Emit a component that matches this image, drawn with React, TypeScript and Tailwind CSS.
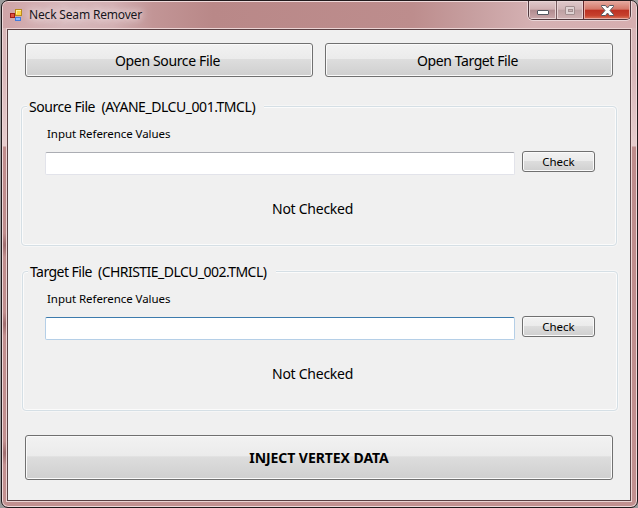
import React from "react";

type ButtonProps = { className: string; children: React.ReactNode };

function WinButton({ className, children }: ButtonProps) {
  return (
    <button
      className={`shrink-0 rounded-[3px] border border-[#707070] bg-[linear-gradient(to_bottom,#f2f2f2_0%,#ebebeb_47%,#dddddd_48%,#cfcfcf_100%)] text-center whitespace-nowrap text-black shadow-[inset_0_0_0_1px_#fafafa] ${className}`}
    >
      {children}
    </button>
  );
}

type GroupProps = {
  title: React.ReactNode;
  groupClass: string;
  legendClass: string;
  bodyClass: string;
  inputClass: string;
};

function Group({ title, groupClass, legendClass, bodyClass, inputClass }: GroupProps) {
  return (
    <section className={`h-[140px] w-[596px] rounded-[4px] border border-[#d5dfe5] shadow-[inset_0_0_0_1px_#fbfbfb,0_0_0_1px_#f6f6f6] ${groupClass}`}>
      <h2 className={`-mt-[11px] ml-[5px] h-[20px] bg-[#f0f0f0] pl-[2px] text-[14px] leading-[21px] whitespace-pre ${legendClass}`}>
        {title}
      </h2>
      <div className={bodyClass}>
        <div className="mt-[8px] h-[18px] text-[11.5px] leading-[20px] tracking-[-0.06px]">
          <span className="ml-[2px]">Input Reference Values</span>
        </div>
        <div className="mt-[9px] flex items-start gap-[7px]">
          <input className={`mt-px h-[23px] w-[470px] rounded-[2px] border bg-white outline-none ${inputClass}`} />
          <WinButton className="h-[21px] w-[73px] text-[11.5px] leading-[19px]">Check</WinButton>
        </div>
        <p className="mt-[24px] ml-[227px] text-[14px] leading-[20px] tracking-[-0.26px]">Not Checked</p>
      </div>
    </section>
  );
}

function AppIcon() {
  return (
    <svg width="14" height="14" viewBox="0 0 14 14" className="shrink-0">
      <rect x="0.5" y="4.5" width="4" height="4" fill="#e0503f" stroke="#a01c18" />
      <rect x="5.5" y="0.5" width="6" height="6" fill="#ffd448" stroke="#b88a1c" />
      <path d="M6 1.5h5M6.5 1v4" stroke="#fff0a0" />
      <rect x="5.5" y="8.5" width="5" height="3" fill="#8ab8ff" stroke="#437bda" />
    </svg>
  );
}

function Caption() {
  return (
    <div className="flex h-[19px] w-[103px] overflow-hidden rounded-b-[5px] border border-t-0 border-[#51383d] shadow-[0_0_0_1px_#ead6d8]">
      <div className="flex w-[27px] justify-center bg-[linear-gradient(to_bottom,#dfc9cb_0%,#d0b0b2_46%,#b08b8f_50%,#cba7aa_100%)] shadow-[inset_0_0_0_1px_#e7d4d5]">
        <svg width="14" height="18" viewBox="0 0 14 18">
          <rect x="1.5" y="9.5" width="11" height="4" rx="0.5" fill="#fff" stroke="#53565f" />
        </svg>
      </div>
      <div className="flex w-[27px] justify-center border-l border-[#775b60] bg-[linear-gradient(to_bottom,#dfc9cb_0%,#d1b6b8_46%,#bda0a2_50%,#d0b1b3_100%)] shadow-[inset_0_0_0_1px_#e7d4d5]">
        <svg width="14" height="18" viewBox="0 0 14 18">
          <rect x="2.5" y="5.5" width="9" height="8" rx="0.5" fill="#dfd2d3" stroke="#a28e8f" />
          <rect x="5.5" y="8.5" width="4" height="2" fill="#c7b2b3" stroke="#a28e8f" />
        </svg>
      </div>
      <div className="flex flex-1 justify-center border-l border-[#65272b] bg-[linear-gradient(to_bottom,#e5aaa0_0%,#d47768_46%,#bd3021_50%,#c6402d_80%,#dc795d_100%)] shadow-[inset_0_0_0_1px_#e9aaa1]">
        <svg width="14" height="18" viewBox="0 0 14 18">
          <path d="M1.5 4.5h4L7.5 7l2-2.5h4v1L10 9.5l3.5 4v1h-4L7.5 12l-2 2.5h-4v-1L5 9.5l-3.5-4z" fill="#fff" stroke="#555962" />
        </svg>
      </div>
    </div>
  );
}

export default function App() {
  return (
    <main className="h-[508px] w-[638px] overflow-hidden bg-[#9b9b9b] pl-px font-['Noto_Sans','Open_Sans',sans-serif] text-black">
      <div className="h-[508px] w-[637px] overflow-hidden rounded-[7px] border border-[#211a1c] bg-[radial-gradient(ellipse_6px_12px_at_3px_244px,#9c6a6c,transparent),radial-gradient(ellipse_6px_12px_at_3px_323px,#9c6a6c,transparent),radial-gradient(ellipse_6px_12px_at_3px_452px,#9c6a6c,transparent),linear-gradient(to_bottom,#d8b4b6_0px,#d9b7b9_70px,#e6cccd_145px,#bf8c8c_146px,#c29090_100%)] shadow-[inset_0_0_0_1px_#efd9da]">
        <header className="m-px mb-0 flex h-[26px] justify-between rounded-t-[5px] bg-[linear-gradient(to_right,#cfa4a7_0px,#d7b8bb_60px,#d3b0b3_110px,#c29596_150px,#b98888_210px,#bd8d8d_410px,#c79fa0_470px,#d5b1b3_530px,#d6aeb0_100%)]">
          <div className="flex pt-[7px] pl-[7px]">
            <AppIcon />
            <h1 className="-mt-[3px] ml-[5px] text-[12px] leading-[18px] tracking-[-0.17px] whitespace-nowrap text-[#17151b] [text-shadow:0_0_7px_#f4e8ea,0_0_8px_#f4e8ea]">
              Neck Seam Remover
            </h1>
          </div>
          <div className="-mt-px mr-[5px]">
            <Caption />
          </div>
        </header>
        <div className="mt-px ml-[5px] h-[472px] w-[624px] border border-[#5a4043] bg-[#f0f0f0] shadow-[0_0_0_1px_#ecd4d4]">
          <div className="flex gap-[12px] pt-[13px] pl-[17px]">
            <WinButton className="h-[34px] w-[288px] pr-[3px] text-[14px] leading-[33px] tracking-[-0.36px]">Open Source File</WinButton>
            <WinButton className="h-[34px] w-[288px] pr-[3px] text-[14px] leading-[33px] tracking-[-0.42px]">Open Target File</WinButton>
          </div>
          <Group
            title="Source File  (AYANE_DLCU_001.TMCL)"
            groupClass="mt-[29px] ml-[13px]"
            legendClass="w-[237px] tracking-[-0.45px]"
            bodyClass="pl-[23px]"
            inputClass="border-[#e2e3ea] border-t-[#abadb3]"
          />
          <Group
            title="Target File  (CHRISTIE_DLCU_002.TMCL)"
            groupClass="mt-[25px] ml-[14px]"
            legendClass="w-[248px] tracking-[-0.54px]"
            bodyClass="pl-[22px]"
            inputClass="border-[#b5cfe7] border-t-[#3d7bad]"
          />
          <div className="mt-[24px] ml-[17px] flex">
            <WinButton className="h-[45px] w-[588px] text-[14px] leading-[43px] font-bold tracking-[-0.06px]">INJECT VERTEX DATA</WinButton>
          </div>
        </div>
      </div>
    </main>
  );
}
